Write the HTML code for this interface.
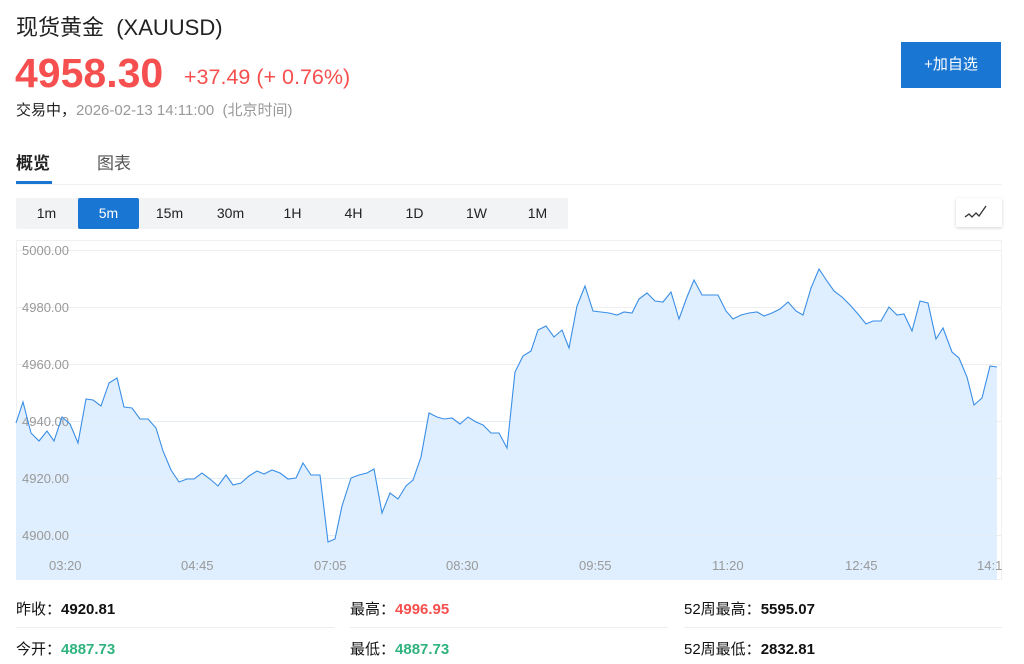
<!DOCTYPE html>
<html><head><meta charset="utf-8"><style>
*{margin:0;padding:0;box-sizing:border-box}
body{width:1024px;height:664px;overflow:hidden;background:#fff;font-family:"Liberation Sans","Noto Sans CJK SC",sans-serif;color:#222;position:relative}
.a{position:absolute;white-space:nowrap}
.per{position:absolute;left:16px;top:198px;width:552px;height:31px;background:#f2f3f5;border-radius:2px}
.per span{position:absolute;top:0;height:31px;width:61px;line-height:31px;text-align:center;font-size:14px;color:#222}
.per span.on{background:#1976d2;color:#fff;border-radius:2px}
.st{position:absolute;font-size:15px;font-weight:bold;color:#111}
.st b{font-weight:normal}
</style></head><body>
<div class="a" style="left:16px;top:10px;font-size:22px;color:#222">现货黄金&nbsp;&nbsp;(XAUUSD)</div>
<div class="a" style="left:15px;top:50px;font-size:41px;font-weight:bold;color:#f5504f;letter-spacing:0px">4958.30</div>
<div class="a" style="left:184px;top:65px;font-size:21.5px;color:#f5504f">+37.49 (+ 0.76%)</div>
<div class="a" style="left:16px;top:99px;font-size:15px;color:#222">交易中，<span style="color:#999">2026-02-13 14:11:00&nbsp;&nbsp;(北京时间)</span></div>
<div class="a" style="left:901px;top:42px;width:100px;height:46px;background:#1976d2;color:#fff;font-size:15px;line-height:46px;text-align:center">+加自选</div>
<div class="a" style="left:16px;top:149px;font-size:17px;font-weight:bold;color:#222">概览</div>
<div class="a" style="left:97px;top:149px;font-size:17px;color:#555">图表</div>
<div class="a" style="left:16px;top:181px;width:36px;height:3px;background:#1976d2"></div>
<div class="a" style="left:16px;top:184px;width:986px;height:1px;background:#f0f2f4"></div>
<div class="per"><span style="left:0">1m</span><span class="on" style="left:62px">5m</span><span style="left:123px">15m</span><span style="left:184px">30m</span><span style="left:246px">1H</span><span style="left:307px">4H</span><span style="left:368px">1D</span><span style="left:430px">1W</span><span style="left:491px">1M</span></div>
<div class="a" style="left:956px;top:198px;width:46px;height:29px;background:#fff;border-radius:2px;box-shadow:0 1px 3px rgba(0,0,0,.18)"><svg width="46" height="29"><path d="M9 19 L13 16 L16 19 L20 15 L23 18 L30 8" fill="none" stroke="#333" stroke-width="1.3"/></svg></div>
<svg class="a" style="left:0;top:0" width="1024" height="600">
<rect x="16.5" y="240.5" width="985" height="339" fill="none" stroke="#eef0f2"/>
<g stroke="#eeeeee"><line x1="16" x2="1001" y1="250.5" y2="250.5"/><line x1="16" x2="1001" y1="307.5" y2="307.5"/><line x1="16" x2="1001" y1="364.5" y2="364.5"/><line x1="16" x2="1001" y1="421.5" y2="421.5"/><line x1="16" x2="1001" y1="478.5" y2="478.5"/><line x1="16" x2="1001" y1="535.5" y2="535.5"/></g>
<polygon fill="#ddeeff" fill-opacity=".95" points="16,580 16,423 23,402 31,433 39,441 47,431 54,441 62,417 70,424 78,443 86,399 93,400 101,406 109,383 117,378 124,407 132,408 140,419 148,419 156,428 163,451 171,470 179,482 187,479 194,479 202,473 210,479 218,486 226,475 233,485 241,483 249,476 257,471 264,474 272,470 280,473 288,479 296,478 303,463 311,475 320,475 328,542 335,539 342,506 351,478 359,475 367,473 374,469 382,513 390,493 398,499 406,486 413,480 421,457 429,413 437,417 444,419 452,418 460,424 468,417 476,422 483,425 491,433 499,433 507,448 515,372 523,356 531,351 538,330 546,326 554,337 562,330 569,348 577,306 585,286 593,311 601,312 609,313 617,315 624,312 632,313 639,299 647,293 655,301 663,302 671,292 679,319 687,297 694,280 702,295 718,295 726,311 733,319 741,315 749,313 757,312 764,316 772,313 780,309 788,302 796,311 803,315 811,288 819,269 827,281 834,291 842,297 850,305 858,314 866,324 873,321 881,321 889,307 897,315 904,314 912,331 920,301 928,303 936,339 943,328 952,352 959,358 967,377 974,405 982,398 990,366 997,367 997,580"/>
<g stroke="#e4ecf4"><line x1="16" x2="997" y1="421.5" y2="421.5"/><line x1="16" x2="997" y1="478.5" y2="478.5"/><line x1="16" x2="997" y1="535.5" y2="535.5"/></g>
<g font-size="13" fill="#999" font-family="Liberation Sans"><text x="22" y="255">5000.00</text><text x="22" y="312">4980.00</text><text x="22" y="369">4960.00</text><text x="22" y="426">4940.00</text><text x="22" y="483">4920.00</text><text x="22" y="540">4900.00</text></g>
<polyline fill="none" stroke="#3a8ee6" stroke-width="1.1" points="16,423 23,402 31,433 39,441 47,431 54,441 62,417 70,424 78,443 86,399 93,400 101,406 109,383 117,378 124,407 132,408 140,419 148,419 156,428 163,451 171,470 179,482 187,479 194,479 202,473 210,479 218,486 226,475 233,485 241,483 249,476 257,471 264,474 272,470 280,473 288,479 296,478 303,463 311,475 320,475 328,542 335,539 342,506 351,478 359,475 367,473 374,469 382,513 390,493 398,499 406,486 413,480 421,457 429,413 437,417 444,419 452,418 460,424 468,417 476,422 483,425 491,433 499,433 507,448 515,372 523,356 531,351 538,330 546,326 554,337 562,330 569,348 577,306 585,286 593,311 601,312 609,313 617,315 624,312 632,313 639,299 647,293 655,301 663,302 671,292 679,319 687,297 694,280 702,295 718,295 726,311 733,319 741,315 749,313 757,312 764,316 772,313 780,309 788,302 796,311 803,315 811,288 819,269 827,281 834,291 842,297 850,305 858,314 866,324 873,321 881,321 889,307 897,315 904,314 912,331 920,301 928,303 936,339 943,328 952,352 959,358 967,377 974,405 982,398 990,366 997,367"/>
<g font-size="13" fill="#999" font-family="Liberation Sans"><text x="49" y="570">03:20</text><text x="181" y="570">04:45</text><text x="314" y="570">07:05</text><text x="446" y="570">08:30</text><text x="579" y="570">09:55</text><text x="712" y="570">11:20</text><text x="845" y="570">12:45</text><text x="977" y="570">14:1</text></g>
</svg>
<div class="st" style="left:16px;top:598px"><b>昨收：</b>4920.81</div>
<div class="st" style="left:350px;top:598px"><b>最高：</b><span style="color:#f5504f">4996.95</span></div>
<div class="st" style="left:684px;top:598px"><b>52周最高：</b>5595.07</div>
<div class="a" style="left:16px;top:627px;width:318px;height:1px;background:#eee"></div>
<div class="a" style="left:350px;top:627px;width:318px;height:1px;background:#eee"></div>
<div class="a" style="left:684px;top:627px;width:318px;height:1px;background:#eee"></div>
<div class="st" style="left:16px;top:638px"><b>今开：</b><span style="color:#2fb37e">4887.73</span></div>
<div class="st" style="left:350px;top:638px"><b>最低：</b><span style="color:#2fb37e">4887.73</span></div>
<div class="st" style="left:684px;top:638px"><b>52周最低：</b>2832.81</div>
</body></html>
